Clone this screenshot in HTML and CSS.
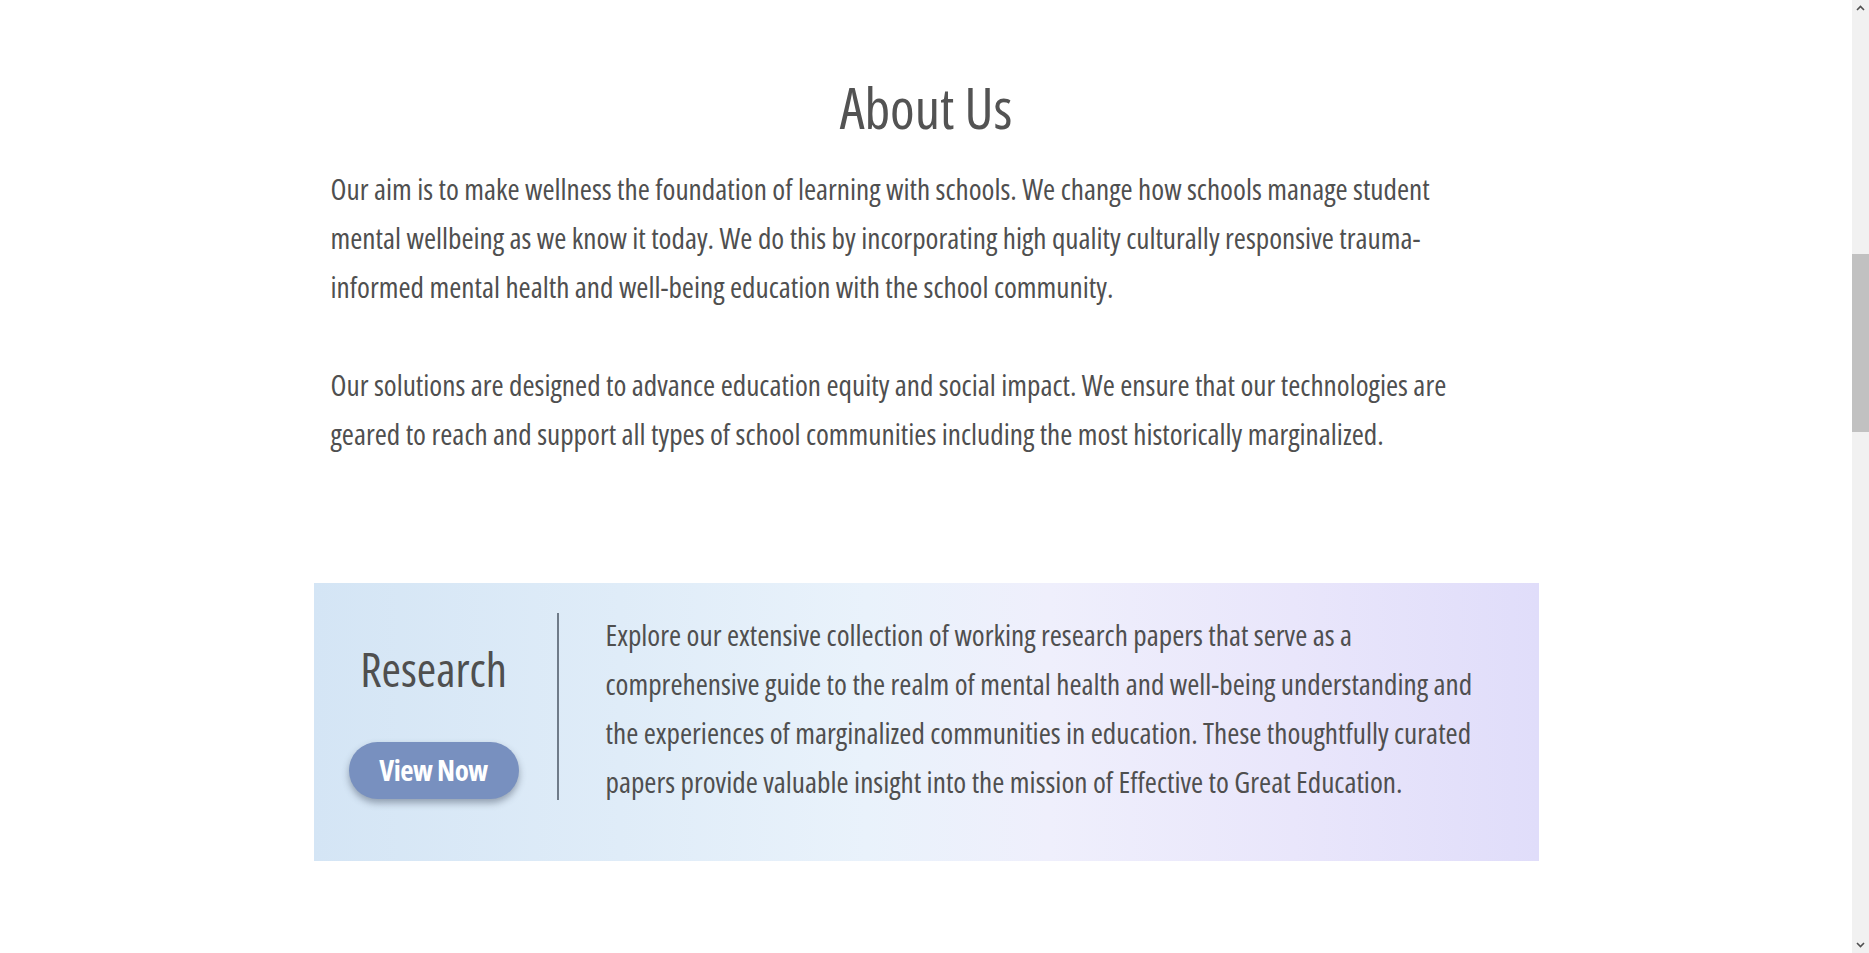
FILE: index.html
```html
<!DOCTYPE html>
<html lang="en">
<head>
<meta charset="utf-8">
<title>About Us</title>
<link rel="stylesheet" href="styles.css">
</head>
<body>
<main class="page">
  <section class="about">
    <h1 class="about-title">About Us</h1>
    <div class="about-text">
      <p>Our aim is to make wellness the foundation of learning with schools. We change how schools manage student mental wellbeing as we know it today. We do this by incorporating high quality culturally responsive trauma-informed mental health and well-being education with the school community.</p>
      <p>Our solutions are designed to advance education equity and social impact. We ensure that our technologies are geared to reach and support all types of school communities including the most historically marginalized.</p>
    </div>
  </section>
  <section class="research">
    <div class="research-side">
      <h2 class="research-title">Research</h2>
      <a class="btn" href="#">View Now</a>
    </div>
    <div class="divider"></div>
    <p class="research-text">Explore our extensive collection of working research papers that serve as a comprehensive guide to the realm of mental health and well-being understanding and the experiences of marginalized communities in education. These thoughtfully curated papers provide valuable insight into the mission of Effective to Great Education.</p>
  </section>
</main>
<div class="scrollbar" aria-hidden="true">
  <svg class="sb-arrow" width="17" height="17" viewBox="0 0 17 17"><path d="M5 10 L8.5 6.5 L12 10" fill="none" stroke="#505050" stroke-width="1.6"/></svg>
  <div class="sb-track"><div class="sb-thumb"></div></div>
  <svg class="sb-arrow" width="17" height="17" viewBox="0 0 17 17"><path d="M5 7 L8.5 10.5 L12 7" fill="none" stroke="#505050" stroke-width="1.6"/></svg>
</div>
</body>
</html>
```
FILE: styles.css
```css
body {
  margin: 0;
  padding-right: 17px;
  background: #ffffff;
  color: #4f4f4f;
  font-family: "Open Sans", "Liberation Sans", sans-serif;
  font-stretch: 75%;
}
.page {
  width: 1225px;
  margin: 0 auto;
}
.about {
  padding-top: 72px;
}
.about-title {
  margin: 0;
  text-align: center;
  font-size: 56px;
  line-height: 70px;
  font-weight: 400;
  color: #535353;
}
.about-text {
  margin: 23px 0 0 17px;
  width: 1152px;
}
.about-text p {
  margin: 0;
  font-size: 29.3px;
  line-height: 49px;
}
.about-text p + p {
  margin-top: 49px;
}
.research {
  margin-top: 124px;
  display: flex;
  align-items: stretch;
  padding: 25px 48px 54px 0;
  background: linear-gradient(90deg, #d4e5f5 0%, #dfecf8 25%, #e9f2fb 45%, #efeffc 60%, #e9e6fb 80%, #e0ddfa 100%);
}
.research-side {
  width: 240px;
  flex: none;
  display: flex;
  flex-direction: column;
  align-items: center;
  padding-top: 31px;
}
.research-title {
  margin: 0;
  font-size: 47px;
  line-height: 60px;
  font-weight: 400;
  color: #4f4f4f;
}
.btn {
  margin-top: 43px;
  width: 170px;
  height: 57px;
  border-radius: 29px;
  background: #7890bf;
  box-shadow: 0 4px 7px rgba(60, 70, 90, 0.45);
  display: flex;
  align-items: center;
  justify-content: center;
  color: #ffffff;
  text-decoration: none;
  font-size: 29px;
  font-weight: 700;
  letter-spacing: -0.5px;
  line-height: 1;
  padding-bottom: 2px;
  box-sizing: border-box;
}
.divider {
  flex: none;
  align-self: center;
  width: 2px;
  height: 187px;
  margin-left: 3px;
  margin-bottom: 2px;
  background: #6f7b89;
}
.research-text {
  margin: 0 0 0 47px;
  padding-top: 3px;
  font-size: 29.3px;
  line-height: 49px;
  color: #4f4f4f;
}
.scrollbar {
  position: fixed;
  top: 0;
  right: 0;
  width: 17px;
  height: 100vh;
  background: #f1f1f1;
  display: flex;
  flex-direction: column;
}
.sb-arrow {
  flex: none;
  display: block;
}
.sb-track {
  flex: 1;
  padding-top: 237px;
}
.sb-thumb {
  width: 100%;
  height: 178px;
  background: #c1c1c1;
}
```
